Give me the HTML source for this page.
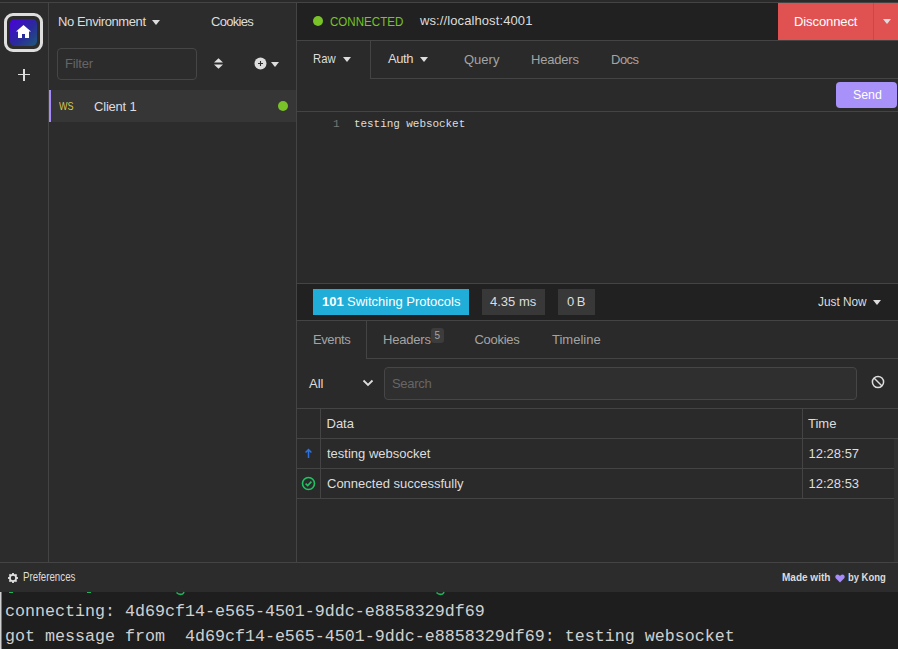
<!DOCTYPE html>
<html><head><meta charset="utf-8">
<style>
*{margin:0;padding:0;box-sizing:border-box}
html,body{width:898px;height:649px;overflow:hidden;background:#2c2c2c}
body{position:relative;font-family:"Liberation Sans",sans-serif;font-size:13px;color:#dddddd}
.a{position:absolute}
.t{position:absolute;white-space:nowrap;line-height:15px;font-size:13px}
.bl{position:absolute;background:#444}
.tri{position:absolute;width:0;height:0;border-left:4px solid transparent;border-right:4px solid transparent;border-top:5px solid #ddd}
.mono{font-family:"Liberation Mono",monospace}
</style></head><body>

<!-- top strip -->
<div class="a" style="left:0;top:0;width:898px;height:2px;background:#2a2a2a"></div>
<div class="bl" style="left:0;top:2px;width:898px;height:1px"></div>

<!-- left sidebar -->
<div class="a" style="left:0;top:3px;width:48px;height:559px;background:#2c2c2c"></div>
<div class="bl" style="left:48px;top:3px;width:1px;height:559px"></div>
<div class="a" style="left:4px;top:13px;width:39px;height:39px;border:3px solid #dedede;border-radius:9px;background:#2c2c2c"></div>
<div class="a" style="left:10px;top:19px;width:27px;height:27px;border-radius:5px;background:linear-gradient(135deg,#4a00e0 0%,#2a2a9a 55%,#1e5a7a 100%)"></div>
<svg class="a" style="left:15px;top:24.3px" width="17" height="15" viewBox="0 0 17 15"><path d="M8.5 1 L1 7.5 L3 7.5 L3 14 L7 14 L7 10 L10 10 L10 14 L14 14 L14 7.5 L16 7.5 Z" fill="#fff"/></svg>
<div class="a" style="left:18px;top:74px;width:12px;height:1.2px;background:#ddd"></div>
<div class="a" style="left:23.4px;top:68.6px;width:1.2px;height:12px;background:#ddd"></div>

<!-- left panel -->
<div class="t" style="left:58px;top:14px;letter-spacing:-0.4px">No Environment</div>
<div class="tri" style="left:152px;top:20px"></div>
<div class="t" style="left:211px;top:14px;letter-spacing:-0.7px">Cookies</div>
<div class="a" style="left:57px;top:48px;width:140px;height:32px;border:1px solid #464646;border-radius:4px;background:#2c2c2c"></div>
<div class="t" style="left:65px;top:56px;color:#666;letter-spacing:-0.15px">Filter</div>
<svg class="a" style="left:213.5px;top:57px" width="10" height="13" viewBox="0 0 10 13"><path d="M4.5 1.3 L9 5.6 L0 5.6 Z M0 7.4 L9 7.4 L4.5 11.8 Z" fill="#e0e0e0"/></svg>
<svg class="a" style="left:254px;top:57px" width="13" height="13" viewBox="0 0 13 13"><circle cx="6.5" cy="6.5" r="6" fill="#ddd"/><path d="M6.5 4 V9 M4 6.5 H9" stroke="#2c2c2c" stroke-width="1.1"/></svg>
<div class="tri" style="left:271px;top:62px"></div>

<div class="a" style="left:49px;top:90px;width:247px;height:32px;background:#363636"></div>
<div class="a" style="left:49px;top:90px;width:2px;height:32px;background:#a78bfa"></div>
<div class="t" style="left:58.5px;top:98.5px;font-size:11px;color:#d8c84d;transform-origin:0 0;transform:scaleX(0.82)">WS</div>
<div class="t" style="left:94px;top:99px;letter-spacing:-0.2px">Client 1</div>
<div class="a" style="left:278px;top:101px;width:10px;height:10px;border-radius:50%;background:#79c228"></div>

<div class="bl" style="left:296px;top:3px;width:1px;height:559px"></div>

<!-- main header -->
<div class="a" style="left:297px;top:3px;width:601px;height:37px;background:#212121"></div>
<div class="bl" style="left:297px;top:40px;width:601px;height:1px"></div>
<div class="a" style="left:313px;top:16px;width:10px;height:10px;border-radius:50%;background:#79c228"></div>
<div class="t" style="left:330px;top:14px;color:#79c228;transform-origin:0 0;transform:scaleX(0.89)">CONNECTED</div>
<div class="t" style="left:420px;top:13px;letter-spacing:0.1px">ws://localhost:4001</div>
<div class="a" style="left:778px;top:3px;width:120px;height:37px;background:#e05252"></div>
<div class="a" style="left:873px;top:3px;width:1px;height:37px;background:#c84848"></div>
<div class="t" style="left:794px;top:14px;color:#fff;letter-spacing:-0.1px">Disconnect</div>
<div class="tri" style="left:883px;top:19px;border-top-color:#ddd"></div>

<!-- request tabs -->
<div class="a" style="left:297px;top:41px;width:601px;height:242px;background:#2a2a2a"></div>
<div class="t" style="left:313px;top:51px;transform-origin:0 0;transform:scaleX(0.87)">Raw</div>
<div class="tri" style="left:343px;top:57px"></div>
<div class="bl" style="left:370px;top:41px;width:1px;height:38px"></div>
<div class="bl" style="left:370px;top:78px;width:528px;height:1px"></div>
<div class="t" style="left:388px;top:51px;letter-spacing:-0.4px">Auth</div>
<div class="tri" style="left:420px;top:57px"></div>
<div class="t" style="left:464px;top:52px;color:#a4a4a4">Query</div>
<div class="t" style="left:531px;top:52px;color:#a4a4a4;letter-spacing:-0.2px">Headers</div>
<div class="t" style="left:611px;top:52px;color:#a4a4a4;letter-spacing:-0.5px">Docs</div>

<div class="a" style="left:836px;top:82px;width:61px;height:26px;border-radius:4px;background:#a991fa"></div>
<div class="t" style="left:852.5px;top:87px;color:#fff;transform-origin:0 0;transform:scaleX(0.95)">Send</div>
<div class="bl" style="left:297px;top:111px;width:601px;height:1px"></div>

<div class="t mono" style="left:333px;top:117px;font-size:11px;color:#777">1</div>
<div class="t mono" style="left:354px;top:117px;font-size:11px;color:#ddd;letter-spacing:-0.06px">testing websocket</div>

<!-- status bar -->
<div class="bl" style="left:297px;top:283px;width:601px;height:1px"></div>
<div class="a" style="left:297px;top:284px;width:601px;height:36px;background:#212121"></div>
<div class="a" style="left:313px;top:289px;width:156px;height:26px;background:#20aed9"></div>
<div class="t" style="left:322px;top:294px;color:#fff;font-weight:bold">101</div>
<div class="t" style="left:347px;top:294px;color:#fff">Switching Protocols</div>
<div class="a" style="left:482px;top:289px;width:63px;height:26px;background:#383838"></div>
<div class="t" style="left:490px;top:294px">4.35 ms</div>
<div class="a" style="left:558px;top:289px;width:37px;height:26px;background:#383838"></div>
<div class="t" style="left:567px;top:294px;letter-spacing:-0.5px">0 B</div>
<div class="t" style="left:818px;top:294px;transform-origin:0 0;transform:scaleX(0.91)">Just Now</div>
<div class="tri" style="left:873px;top:300px"></div>
<div class="bl" style="left:297px;top:320px;width:601px;height:1px"></div>

<!-- response tabs -->
<div class="a" style="left:297px;top:321px;width:601px;height:241px;background:#2a2a2a"></div>
<div class="t" style="left:313px;top:332px;color:#a4a4a4;letter-spacing:-0.4px">Events</div>
<div class="bl" style="left:366px;top:321px;width:1px;height:37px"></div>
<div class="bl" style="left:366px;top:358px;width:532px;height:1px"></div>
<div class="t" style="left:383px;top:332px;color:#a4a4a4;letter-spacing:-0.2px">Headers</div>
<div class="a" style="left:431px;top:328px;width:13px;height:15px;border-radius:3px;background:#3c3c3c"></div>
<div class="t" style="left:434.5px;top:328px;font-size:10px;color:#a4a4a4">5</div>
<div class="t" style="left:474.5px;top:332px;color:#a4a4a4;letter-spacing:-0.3px">Cookies</div>
<div class="t" style="left:552px;top:332px;color:#a4a4a4">Timeline</div>

<div class="t" style="left:309px;top:376px">All</div>
<svg class="a" style="left:362px;top:379px" width="12" height="8" viewBox="0 0 12 8"><path d="M1.5 1.5 L6 6 L10.5 1.5" stroke="#ddd" stroke-width="1.8" fill="none"/></svg>
<div class="a" style="left:384px;top:367px;width:473px;height:33px;border:1px solid #464646;border-radius:4px;background:#2f2f2f"></div>
<div class="t" style="left:392px;top:376px;color:#666;letter-spacing:-0.3px">Search</div>
<svg class="a" style="left:871px;top:375px" width="14" height="14" viewBox="0 0 14 14"><circle cx="7" cy="7" r="5.6" stroke="#ddd" stroke-width="1.5" fill="none"/><path d="M3 3 L11 11" stroke="#ddd" stroke-width="1.5"/></svg>

<!-- table -->
<div class="bl" style="left:297px;top:408px;width:601px;height:1px"></div>
<div class="bl" style="left:320px;top:409px;width:1px;height:90px"></div>
<div class="bl" style="left:802px;top:409px;width:1px;height:90px"></div>
<div class="t" style="left:326.5px;top:416px">Data</div>
<div class="t" style="left:808px;top:416px">Time</div>
<div class="bl" style="left:297px;top:438px;width:601px;height:1px"></div>
<div class="bl" style="left:297px;top:468px;width:597px;height:1px"></div>
<div class="bl" style="left:297px;top:498px;width:597px;height:1px"></div>
<div class="a" style="left:894px;top:439px;width:4px;height:123px;background:#313131"></div>
<svg class="a" style="left:304px;top:448px" width="9" height="11" viewBox="0 0 9 11"><path d="M4.5 10 V1.8 M1.6 4.6 L4.5 1.6 L7.4 4.6" stroke="#2f72dc" stroke-width="1.5" fill="none"/></svg>
<div class="t" style="left:327px;top:446px">testing websocket</div>
<div class="t" style="left:808.5px;top:446px">12:28:57</div>
<svg class="a" style="left:301px;top:476px" width="15" height="15" viewBox="0 0 15 15"><circle cx="7.5" cy="7.5" r="6" stroke="#1fc462" stroke-width="1.6" fill="none"/><path d="M4.6 7.7 L6.7 9.6 L10.4 5.6" stroke="#1fc462" stroke-width="1.6" fill="none"/></svg>
<div class="t" style="left:327px;top:476px">Connected successfully</div>
<div class="t" style="left:808.5px;top:476px">12:28:53</div>

<!-- footer -->
<div class="bl" style="left:0;top:562px;width:898px;height:1px"></div>
<div class="a" style="left:0;top:563px;width:898px;height:29px;background:#2c2c2c"></div>
<svg class="a" style="left:7px;top:571.5px" width="12" height="12" viewBox="-6 -6 12 12"><circle cx="0" cy="0" r="3.1" stroke="#e0e0e0" stroke-width="1.7" fill="none"/><rect x="-0.9" y="-5" width="1.8" height="2.2" transform="rotate(0)" fill="#e0e0e0"/><rect x="-0.9" y="-5" width="1.8" height="2.2" transform="rotate(45)" fill="#e0e0e0"/><rect x="-0.9" y="-5" width="1.8" height="2.2" transform="rotate(90)" fill="#e0e0e0"/><rect x="-0.9" y="-5" width="1.8" height="2.2" transform="rotate(135)" fill="#e0e0e0"/><rect x="-0.9" y="-5" width="1.8" height="2.2" transform="rotate(180)" fill="#e0e0e0"/><rect x="-0.9" y="-5" width="1.8" height="2.2" transform="rotate(225)" fill="#e0e0e0"/><rect x="-0.9" y="-5" width="1.8" height="2.2" transform="rotate(270)" fill="#e0e0e0"/><rect x="-0.9" y="-5" width="1.8" height="2.2" transform="rotate(315)" fill="#e0e0e0"/></svg>
<div class="t" style="left:23px;top:570px;font-size:12px;transform-origin:0 0;transform:scaleX(0.81)">Preferences</div>
<div class="t" style="left:782px;top:569.5px;font-size:11.5px;font-weight:bold;transform-origin:0 0;transform:scaleX(0.87)">Made with</div>
<svg class="a" style="left:835px;top:573.5px" width="10" height="9" viewBox="0 0 10 9"><path d="M5 8.5 L1 4.5 C-0.5 3 0.5 0.5 2.6 0.5 C3.8 0.5 4.5 1.3 5 2 C5.5 1.3 6.2 0.5 7.4 0.5 C9.5 0.5 10.5 3 9 4.5 Z" fill="#a78bfa"/></svg>
<div class="t" style="left:848px;top:569.5px;font-size:11.5px;font-weight:bold;transform-origin:0 0;transform:scaleX(0.82)">by Kong</div>

<!-- terminal -->
<div class="a" style="left:0;top:592px;width:898px;height:57px;background:#1e1e1e"></div>
<div class="a" style="left:0;top:592px;width:1px;height:57px;background:#d0d0d0"></div><div class="a" style="left:1px;top:592px;width:1px;height:57px;background:#777"></div>

<div class="a" style="left:9px;top:592px;width:4px;height:1.4px;background:#1fb45c"></div>
<div class="a" style="left:87px;top:592px;width:4px;height:1.4px;background:#1fb45c"></div>
<svg class="a" style="left:175px;top:590px" width="11" height="6" viewBox="0 0 11 6"><path d="M1.5 2.5 Q4 5.2 7.5 4 Q8.5 3.5 9 2" stroke="#1fb45c" stroke-width="1.5" fill="none"/></svg>
<svg class="a" style="left:435px;top:590px" width="11" height="6" viewBox="0 0 11 6"><path d="M1.5 2.5 Q4 5.2 7.5 4 Q8.5 3.5 9 2" stroke="#1fb45c" stroke-width="1.5" fill="none"/></svg>
<div class="a mono" style="left:5px;top:598.6px;font-size:16.67px;line-height:25px;color:#d0d0d0;white-space:pre">connecting: 4d69cf14-e565-4501-9ddc-e8858329df69
got message from  4d69cf14-e565-4501-9ddc-e8858329df69: testing websocket</div>
</body></html>
